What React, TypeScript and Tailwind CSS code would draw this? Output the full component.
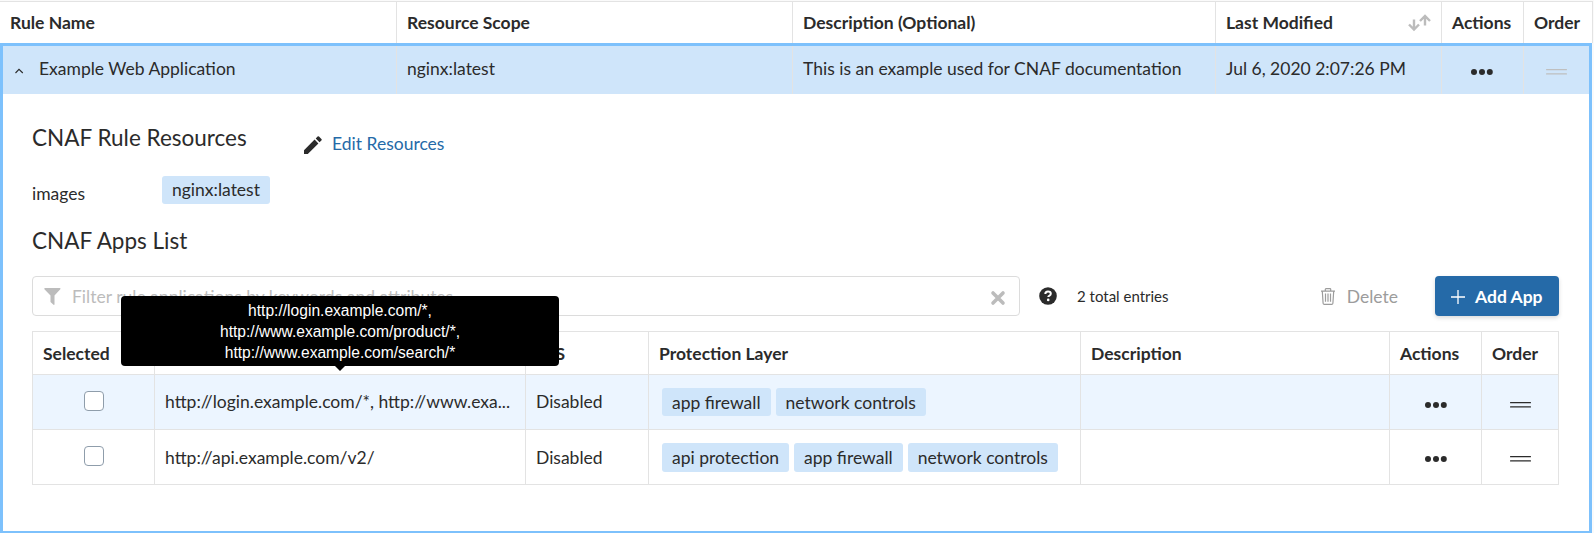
import type { ReactNode } from "react";

const OUTER_COLS = "grid grid-cols-[397px_396px_423px_226px_82px_1fr]";
const INNER_COLS = "grid grid-cols-[122px_371px_123px_432px_309px_92px_1fr]";

function Badge({ children, tall }: { children: ReactNode; tall?: boolean }) {
  return (
    <span
      className={`${tall ? "h-[29px]" : "h-7"} rounded-[3px] bg-[#cfe5fa] px-2.5 leading-[30px] whitespace-nowrap`}
    >
      {children}
    </span>
  );
}

function Dots() {
  return (
    <svg width="22" height="6" viewBox="0 0 22 6" fill="#2b2b2b">
      <circle cx="3" cy="3" r="3" />
      <circle cx="11" cy="3" r="3" />
      <circle cx="18.8" cy="3" r="3" />
    </svg>
  );
}

function Handle({ color }: { color: string }) {
  return (
    <svg width="21" height="6" viewBox="0 0 21 6" fill={color}>
      <rect width="21" height="1.2" rx=".5" />
      <rect y="4.2" width="21" height="1.2" rx=".5" />
    </svg>
  );
}

function AppRow({
  path,
  layers,
  active,
}: {
  path: string;
  layers: string[];
  active?: boolean;
}) {
  const cell = "border-r border-[#e3e3e3]";
  return (
    <div
      className={`${INNER_COLS} h-[55px] border-b border-[#e3e3e3] ${active ? "bg-[#ecf5ff]" : "bg-white"}`}
    >
      <div className={`${cell} pt-4 pl-[51px]`}>
        <div className="h-5 w-5 rounded-[4px] border border-[#8f9dab] bg-white" />
      </div>
      <div className={`${cell} overflow-hidden pl-2.5 ${active ? "pt-3.5" : "pt-[15px]"}`}>
        <div className="whitespace-nowrap">{path}</div>
      </div>
      <div className={`${cell} pl-2.5 ${active ? "pt-3.5" : "pt-[15px]"}`}>Disabled</div>
      <div className={`${cell} flex items-start gap-[5px] pl-[13px] pt-[13px]`}>
        {layers.map((l) => (
          <Badge key={l} tall={!active}>
            {l}
          </Badge>
        ))}
      </div>
      <div className={cell} />
      <div className={`${cell} flex items-start pl-[35px] ${active ? "pt-[27px]" : "pt-[26px]"}`}>
        <Dots />
      </div>
      <div className={`flex items-start pl-7 ${active ? "pt-[27px]" : "pt-[26px]"}`}>
        <Handle color="#2b2b2b" />
      </div>
    </div>
  );
}

export default function App() {
  const outerHead = "border-r border-[#e3e3e3] pl-[10px] pt-2";
  const outerCell = "border-r border-[#e3e3e3] pl-[10px] pt-2.5";
  const innerHead = "border-r border-[#e3e3e3] pl-[10px] pt-[9px]";
  return (
    <div className="h-[533px] w-[1594px] overflow-hidden bg-[#fafafa] pt-px font-['Lato',sans-serif] text-[17.5px] leading-[26px] text-[#2b2b2b]">
      <div className="w-[1593px] border-t border-[#e3e3e3] bg-white">
        <div className={`${OUTER_COLS} h-[41px] font-bold`}>
          <div className={outerHead}>Rule Name</div>
          <div className={outerHead}>Resource Scope</div>
          <div className={outerHead}>Description (Optional)</div>
          <div className={`${outerHead} flex items-start justify-between pr-2.5`}>
            <span>Last Modified</span>
            <svg width="23" height="18" viewBox="0 0 23 18" fill="none" stroke="#bcbcbc" strokeWidth="2.4" className="mt-1">
              <path d="M6 5.500v9.500M1 10.500l5 5 5-5M17 11.500V2M12 7l5-5 5 5" />
            </svg>
          </div>
          <div className={outerHead}>Actions</div>
          <div className={outerHead}>Order</div>
        </div>
      </div>

      <div className="h-[490px] w-[1592px] border-3 border-b-2 border-[#7dc1fc] bg-white">
        <div className="grid h-12 grid-cols-[394px_396px_423px_226px_82px_1fr] bg-[#cfe5fa]">
          <div className={`${outerCell} flex items-start`}>
            <svg width="12" height="8" viewBox="0 0 12 8" fill="none" stroke="#2b2b2b" strokeWidth="1.1" className="mt-[11px] w-3">
              <path d="M2.500 6L6 2.300l3.800 3.700" />
            </svg>
            <span className="ml-3.5">Example Web Application</span>
          </div>
          <div className={outerCell}>nginx:latest</div>
          <div className={outerCell}>This is an example used for CNAF documentation</div>
          <div className={outerCell}>Jul 6, 2020 2:07:26 PM</div>
          <div className="flex items-start border-r border-[#e3e3e3] pt-[23px] pl-[29px]">
            <Dots />
          </div>
          <div className="flex items-start pt-[23px] pl-[22px]">
            <Handle color="#bfbfbf" />
          </div>
        </div>

        <div className="pl-[29px] pr-[30px]">
          <div className="flex h-[82px] items-start">
            <h2 className="w-[270px] pt-[30px] text-[22.5px] leading-7">CNAF Rule Resources</h2>
            <a className="flex items-start pt-[37px] text-[#256aa8]">
              <svg width="18" height="18" viewBox="0 0 18 18" fill="#2b2b2b" className="mt-[5px] ml-0.5">
                <path d="M0 14.200L10.600 3.600l3.800 3.800L3.800 18H0zM11.700 2.500l1.900-1.900a1 1 0 0 1 1.400 0l2.400 2.400a1 1 0 0 1 0 1.400l-1.900 1.900z" />
              </svg>
              <span className="ml-2.5">Edit Resources</span>
            </a>
          </div>
          <div className="flex h-[48px] items-start">
            <span className="w-[130px] pt-[5px]">images</span>
            <span className="h-7 rounded-[3px] bg-[#cfe5fa] px-2.5 leading-[27px]">nginx:latest</span>
          </div>
          <h2 className="h-[52px] text-[22.5px] leading-7">
            <span className="block pt-[3px]">CNAF Apps List</span>
          </h2>

          <div className="flex h-10 items-start">
            <div className="flex h-10 w-[988px] items-start rounded-[4px] border border-[#dcdcdc] pl-[11px] pr-[13px]">
              <svg width="18" height="18" viewBox="0 0 18 18" fill="#bcbcbc" className="mt-[11px]">
                <path d="M.8 0h15.200q.9.300.300 1.200L10.500 7.500v9q-.3.700-1 .3L6.500 14V7.500L.4 1.200Q0 .3.800 0z" />
              </svg>
              <span className="ml-[10px] flex-1 pt-[7px] text-[#bcbcbc]">
                Filter rule applications by keywords and attributes
              </span>
              <svg width="16" height="16" viewBox="0 0 16 16" stroke="#bcbcbc" strokeWidth="3.600" strokeLinecap="round" className="mt-[13px]">
                <path d="M3 3l10 10M13 3L3 13" />
              </svg>
            </div>
            <svg width="18" height="18" viewBox="0 0 18 18" className="mt-[11px] ml-[19px]">
              <circle cx="9" cy="9" r="8.800" fill="#2b2b2b" />
              <path d="M6.300 7Q6.300 4.400 9 4.400q2.800 0 2.800 2.300 0 1.200-1.300 1.900-1.200.600-1.200 1.400" fill="none" stroke="#fff" strokeWidth="2" />
              <circle cx="9.200" cy="12.900" r="1.300" fill="#fff" />
            </svg>
            <span className="ml-5 pt-[7px] text-[15px]">2 total entries</span>
            <div className="ml-auto flex items-start text-[#9c9c9c]">
              <svg width="14" height="17" viewBox="0 0 14 17" fill="none" stroke="#9c9c9c" strokeWidth="1.200" className="mt-3">
                <path d="M0 3.200h14M4.300 3V1.300Q4.300.7 5 .7h4q.7 0 .7.600V3M1.300 3.200l.8 12q.1 1.100 1.200 1.100h7.400q1.100 0 1.200-1.100l.8-12M4.500 5.500v8.300M7 5.500v8.300M9.500 5.500v8.300" />
              </svg>
              <span className="ml-3 pt-2">Delete</span>
            </div>
            <button className="ml-[37px] flex h-10 w-[124px] items-start rounded-[4px] bg-[#256aa8] pl-4 text-white shadow-[0_2px_4px_rgba(0,0,0,0.15)]">
              <svg width="14" height="14" viewBox="0 0 14 14" stroke="#fff" strokeWidth="1.300" className="mt-3.5">
                <path d="M7 0v14M0 7h14" />
              </svg>
              <span className="ml-2.5 pt-2 font-bold">Add App</span>
            </button>
          </div>

          <div className="mt-[15px] w-[1527px] border border-b-0 border-[#e3e3e3]">
            <div className={`${INNER_COLS} h-[43px] border-b border-[#e3e3e3] font-bold`}>
              <div className={innerHead}>Selected</div>
              <div className={`${innerHead} relative`}>
                <div className="absolute top-[-36px] left-[-34px] z-10 h-[70px] w-[438px] rounded-[4px] bg-black pt-1 text-center font-['Liberation_Sans',sans-serif] text-[15.600px] leading-[21px] font-normal text-white">
                  <div>http://login.example.com/*,</div>
                  <div>http://www.example.com/product/*,</div>
                  <div>http://www.example.com/search/*</div>
                  <svg width="10" height="5" viewBox="0 0 10 5" className="absolute top-[70px] left-[214px]">
                    <path d="M0 0h10L5 5z" />
                  </svg>
                </div>
              </div>
              <div className={innerHead}>TLS</div>
              <div className={innerHead}>Protection Layer</div>
              <div className={innerHead}>Description</div>
              <div className={innerHead}>Actions</div>
              <div className="pt-[9px] pl-[10px]">Order</div>
            </div>
            <AppRow
              path="http://login.example.com/*, http://www.exa..."
              layers={["app firewall", "network controls"]}
              active
            />
            <AppRow
              path="http://api.example.com/v2/"
              layers={["api protection", "app firewall", "network controls"]}
            />
          </div>
        </div>
      </div>
    </div>
  );
}
